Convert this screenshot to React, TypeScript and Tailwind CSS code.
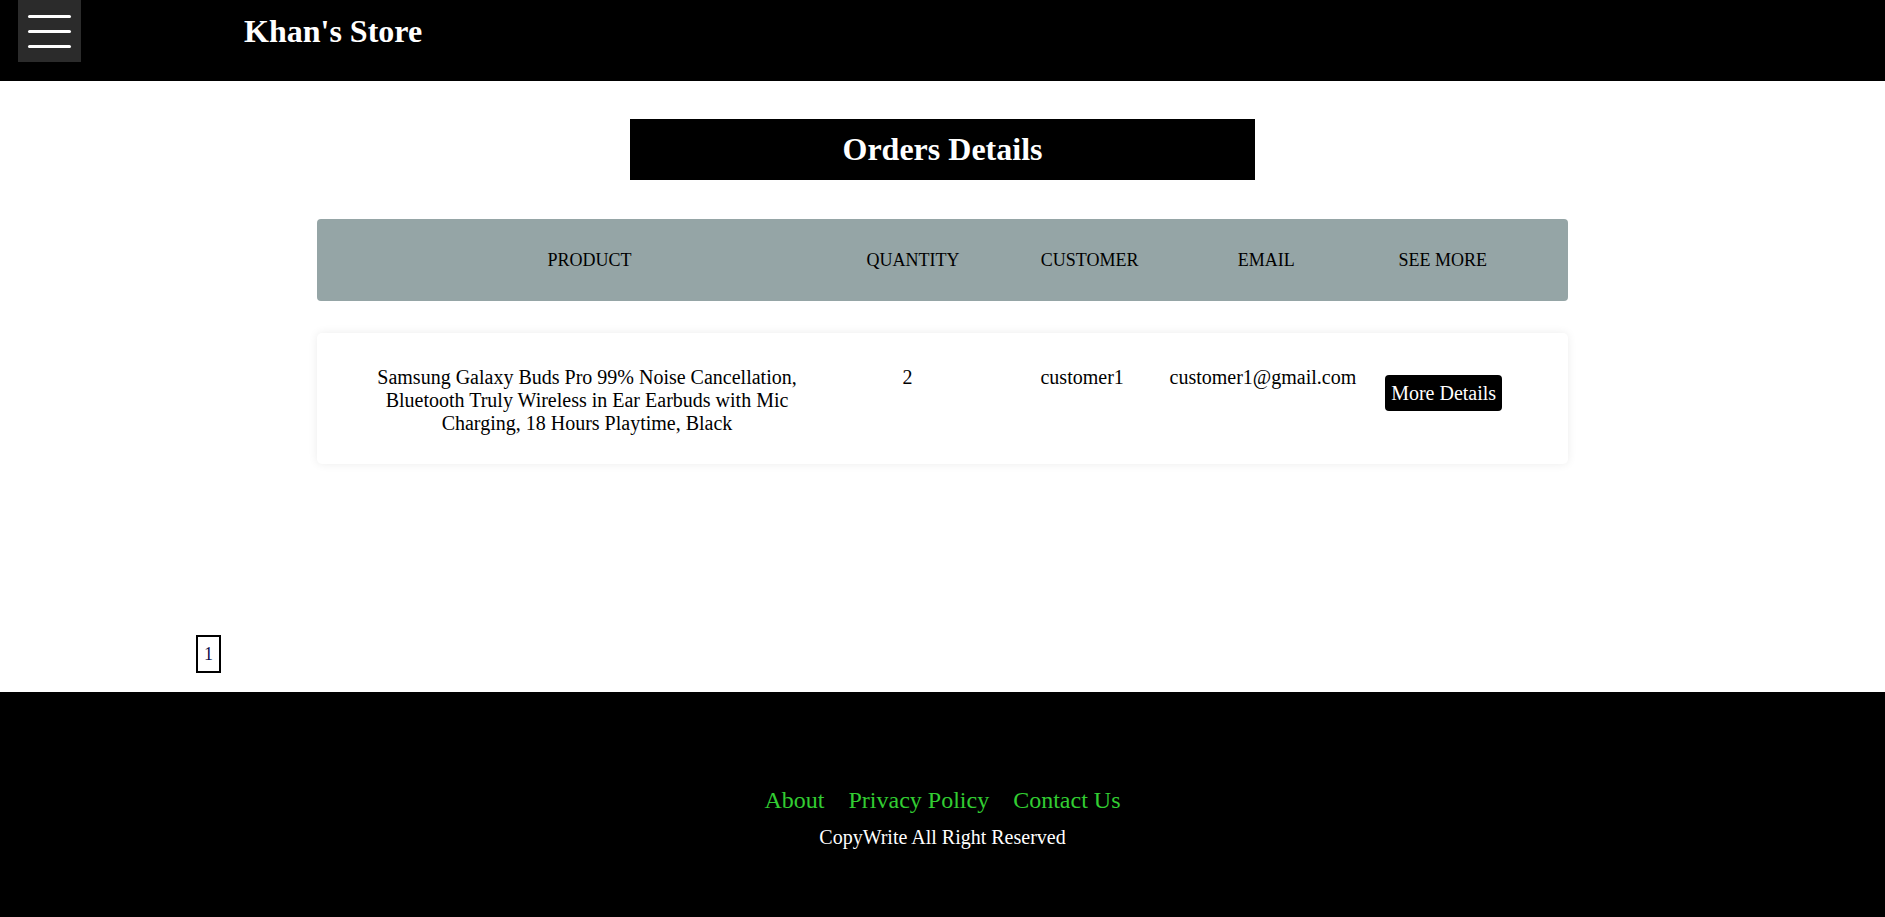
import React from 'react';

const orders = [
    {
        id: 1,
        product: 'Samsung Galaxy Buds Pro 99% Noise Cancellation, Bluetooth Truly Wireless in Ear Earbuds with Mic Charging, 18 Hours Playtime, Black',
        quantity: 2,
        customer: 'customer1',
        email: 'customer1@gmail.com',
    },
];

const columns = ['PRODUCT', 'QUANTITY', 'CUSTOMER', 'EMAIL', 'SEE MORE'];

const App: React.FC = () => {
    return (
        <div className="min-h-screen flex flex-col bg-white text-black font-['Liberation_Serif','Times_New_Roman',serif]">
            {/* Header */}
            <header className="h-[81px] bg-black">
                <div className="h-[62px] flex items-center">
                    <button className="ml-[18px] w-[63px] h-[62px] bg-[#2b2b2b] flex flex-col items-center justify-center gap-[12px]">
                        <span className="block w-[43px] h-[3px] rounded-full bg-white" />
                        <span className="block w-[43px] h-[3px] rounded-full bg-white" />
                        <span className="block w-[43px] h-[3px] rounded-full bg-white" />
                    </button>
                    <h1 className="ml-[163px] text-[32px] font-bold text-white leading-[1.15]">Khan's Store</h1>
                </div>
            </header>

            {/* Main */}
            <main className="h-[611px] flex flex-col">
                <div className="mt-[38px] mx-auto w-[625px] h-[61px] bg-black flex items-center justify-center">
                    <h2 className="text-[32px] font-bold text-white leading-[1.15]">Orders Details</h2>
                </div>

                <div className="mt-[39px] mx-auto w-[1251px]">
                    {/* Table header */}
                    <div className="h-[82px] bg-[#95a5a6] rounded-[4px] px-[37px] grid grid-cols-[8fr_3fr_3fr_3fr_3fr] items-center text-[18px] text-center">
                        {columns.map((c) => (
                            <p key={c}>{c}</p>
                        ))}
                    </div>

                    {/* Rows */}
                    {orders.map((o) => (
                        <div
                            key={o.id}
                            className="mt-[32px] bg-white rounded-[5px] shadow-[0_0_10px_rgba(0,0,0,0.08)] px-[37px] pt-[33px] pb-[29px] grid grid-cols-[8fr_3fr_3fr_3fr_3fr] items-start text-[20px] leading-[23px] text-center"
                        >
                            <p>{o.product}</p>
                            <p>{o.quantity}</p>
                            <p>{o.customer}</p>
                            <p>{o.email}</p>
                            <div className="flex justify-center">
                                <button className="mt-[9px] bg-black text-white rounded-[4px] px-[6px] h-[36px] text-[20px]">
                                    More Details
                                </button>
                            </div>
                        </div>
                    ))}
                </div>

                {/* Pagination */}
                <div className="mt-auto mb-[19px] ml-[196px] flex">
                    <span className="w-[25px] h-[38px] border-2 border-black flex items-center justify-center text-[18px] text-[#10104a]">1</span>
                </div>
            </main>

            {/* Footer */}
            <footer className="h-[225px] bg-black pt-[95px] flex flex-col items-center">
                <div className="flex gap-[24px] text-[24px] text-[#32cd32] leading-[1.15]">
                    <a>About</a>
                    <a>Privacy Policy</a>
                    <a>Contact Us</a>
                </div>
                <p className="mt-[11px] text-[20px] text-white leading-[1.15]">CopyWrite All Right Reserved</p>
            </footer>
        </div>
    );
};

export default App;
